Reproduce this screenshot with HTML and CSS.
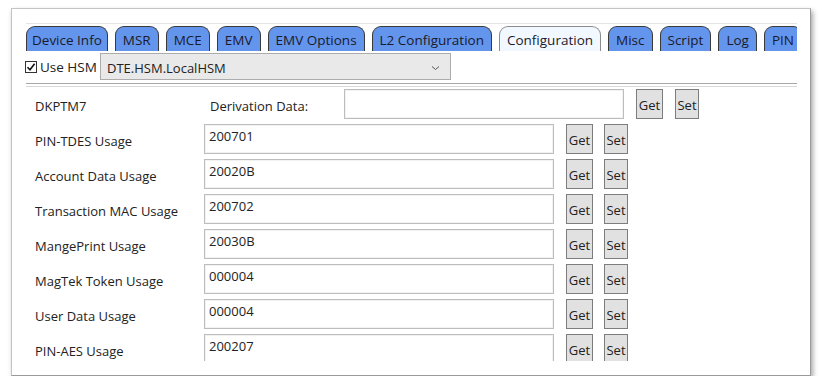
FILE: index.html
```html
<!DOCTYPE html>
<html lang="en">
<head>
    <meta charset="UTF-8">
    <meta name="viewport" content="width=device-width, initial-scale=1.0">
    <title>Configuration</title>
    <link rel="stylesheet" href="styles.css">
</head>
<body>
    <div class="window">
        <div class="tabstrip">
            <div class="tab">Device Info</div>
            <div class="tab">MSR</div>
            <div class="tab">MCE</div>
            <div class="tab">EMV</div>
            <div class="tab">EMV Options</div>
            <div class="tab">L2 Configuration</div>
            <div class="tab selected">Configuration</div>
            <div class="tab">Misc</div>
            <div class="tab">Script</div>
            <div class="tab">Log</div>
            <div class="tab">PIN</div>
        </div>

        <div class="hsm-row">
            <label class="check">
                <span class="box">
                    <svg width="10" height="10" viewBox="0 0 10 10"><path d="M1.5 5.2 L4 7.8 L8.6 1.8" fill="none" stroke="#111" stroke-width="1.6"/></svg>
                </span>
                Use HSM
            </label>
            <div class="combo">
                <span>DTE.HSM.LocalHSM</span>
                <svg class="chevron" width="9" height="6" viewBox="0 0 9 6"><path d="M1 1.5 L4.5 4.5 L8 1.5" fill="none" stroke="#555" stroke-width="1"/></svg>
            </div>
        </div>

        <div class="sep"></div>

        <div class="panel">
            <div class="row-first">
                <span class="name">DKPTM7</span>
                <span class="deriv">Derivation Data:</span>
                <div class="field wide"></div>
                <button class="btn get">Get</button>
                <button class="btn set">Set</button>
            </div>
            <div class="row">
                <span class="name">PIN-TDES Usage</span>
                <div class="field">200701</div>
                <button class="btn get">Get</button>
                <button class="btn set">Set</button>
            </div>
            <div class="row">
                <span class="name">Account Data Usage</span>
                <div class="field">20020B</div>
                <button class="btn get">Get</button>
                <button class="btn set">Set</button>
            </div>
            <div class="row">
                <span class="name">Transaction MAC Usage</span>
                <div class="field">200702</div>
                <button class="btn get">Get</button>
                <button class="btn set">Set</button>
            </div>
            <div class="row">
                <span class="name">MangePrint Usage</span>
                <div class="field">20030B</div>
                <button class="btn get">Get</button>
                <button class="btn set">Set</button>
            </div>
            <div class="row">
                <span class="name">MagTek Token Usage</span>
                <div class="field">000004</div>
                <button class="btn get">Get</button>
                <button class="btn set">Set</button>
            </div>
            <div class="row">
                <span class="name">User Data Usage</span>
                <div class="field">000004</div>
                <button class="btn get">Get</button>
                <button class="btn set">Set</button>
            </div>
            <div class="row">
                <span class="name">PIN-AES Usage</span>
                <div class="field">200207</div>
                <button class="btn get">Get</button>
                <button class="btn set">Set</button>
            </div>
        </div>
    </div>
</body>
</html>
```

FILE: styles.css
```css
body {
    margin: 0;
    padding: 8px 0 0 11px;
    background: #ffffff;
    font-family: 'Open Sans', 'Noto Sans', sans-serif;
    font-size: 13px;
    color: #222;
}
.window {
    width: 798px;
    height: 366px;
    background: #ffffff;
    border: 1px solid #c4c4c4;
    border-right-color: #9a9a9a;
    border-bottom-color: #9a9a9a;
    box-shadow: 2px 3px 5px rgba(0, 0, 0, 0.35);
}
.tabstrip {
    display: flex;
    gap: 7px;
    width: 771px;
    height: 28px;
    margin: 14px 0 0 14px;
    padding-top: 3px;
    border-top: 1px solid #e4e4e4;
    overflow: hidden;
    align-items: flex-end;
    box-sizing: border-box;
}
.tab {
    flex: none;
    height: 24px;
    padding: 0 7px;
    line-height: 26px;
    font-size: 13.5px;
    color: #1a1a2a;
    background: #6495ed;
    border: 1px solid #3a3a3a;
    border-bottom: none;
    border-radius: 9px 9px 0 0;
}
.tab:first-child {
    padding: 0 5px;
}
.tab.selected {
    background: #f2f8ff;
    border-color: #8c8c8c;
}
.hsm-row {
    display: flex;
    align-items: center;
    height: 27px;
    margin: 2px 0 0 13px;
}
.check {
    display: flex;
    align-items: center;
    gap: 3px;
    width: 75px;
    font-size: 13.5px;
}
.box {
    display: flex;
    justify-content: center;
    align-items: center;
    width: 10px;
    height: 10px;
    border: 1px solid #333;
    background: #fff;
}
.combo {
    display: flex;
    align-items: center;
    justify-content: space-between;
    width: 351px;
    height: 27px;
    padding: 2px 10px 0 6px;
    box-sizing: border-box;
    background: #e9e9e9;
    border: 1px solid #acacac;
}
.sep {
    width: 771px;
    height: 2px;
    margin: 3px 0 0 14px;
    border-top: 1px solid #a8a8a8;
    border-bottom: 1px solid #d8d8d8;
}
.panel {
    height: 274px;
    overflow: hidden;
    padding: 2px 0 0 23px;
    box-sizing: border-box;
}
.row-first,
.row {
    display: flex;
    align-items: center;
    height: 30px;
    margin-bottom: 5px;
}
.name {
    width: 169px;
    padding-top: 3px;
}
.row-first .name {
    width: 175px;
}
.deriv {
    width: 134px;
    padding-top: 3px;
}
.field {
    width: 350px;
    height: 30px;
    padding: 2px 4px;
    box-sizing: border-box;
    border: 1px solid #bdbdbd;
    box-shadow: inset 0 0 0 1px #f2f2f2;
    align-self: flex-start;
}
.field.wide {
    width: 280px;
}
.btn {
    height: 30px;
    padding: 2px 0 0;
    margin-left: 12px;
    font-family: inherit;
    font-size: 13px;
    color: #222;
    background: #e1e1e1;
    border: 1px solid #7d7d7d;
    box-sizing: border-box;
}
.btn.get {
    width: 27px;
}
.btn.set {
    width: 24px;
    margin-left: 11px;
}
.row-first .btn.set {
    margin-left: 12px;
}
```
